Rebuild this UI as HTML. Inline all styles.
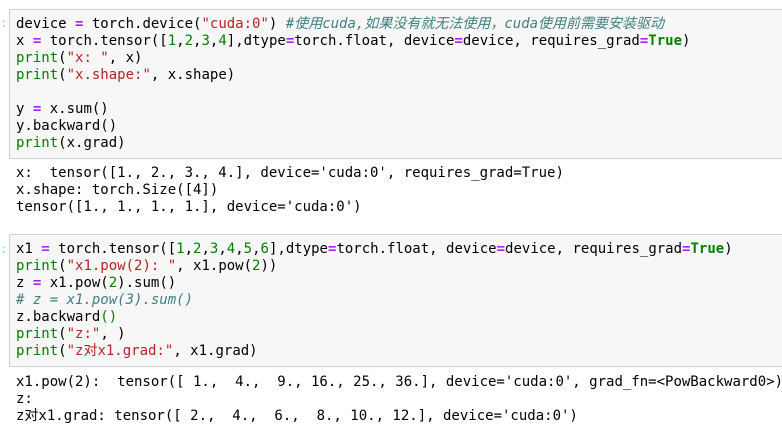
<!DOCTYPE html>
<html><head><meta charset="utf-8"><style>
body{margin:0;width:782px;height:428px;background:#fff;overflow:hidden;position:relative;font-family:"DejaVu Sans Mono","Liberation Mono","Noto Sans CJK SC",monospace;font-size:14px;color:#000}
.cell{position:absolute;left:9px;width:790px;background:#f7f7f7;border:1px solid #cfcfcf;border-radius:2px}
pre{margin:0;font:inherit;line-height:17px;white-space:pre;position:absolute;left:16px}
.k{color:#008000}.s{color:#ba2121}.n{color:#008000}.o{color:#aa22ff;font-weight:bold}.c{color:#408080;font-style:italic}.b{color:#008000;font-weight:bold}
.m{position:absolute;left:0;color:#7fd6f5;font-size:12px}
</style></head><body>
<div class="m" style="top:16px">:</div>
<div class="cell" style="top:9px;height:148px"></div>
<pre style="top:16px">device <span class="o">=</span> torch.device(<span class="s">"cuda:0"</span>) <span class="c">#使用cuda,如果没有就无法使用，cuda使用前需要安装驱动</span>
x <span class="o">=</span> torch.tensor([<span class="n">1</span>,<span class="n">2</span>,<span class="n">3</span>,<span class="n">4</span>],dtype<span class="o">=</span>torch.float, device<span class="o">=</span>device, requires_grad<span class="o">=</span><span class="b">True</span>)
<span class="k">print</span>(<span class="s">"x: "</span>, x)
<span class="k">print</span>(<span class="s">"x.shape:"</span>, x.shape)

y <span class="o">=</span> x.sum()
y.backward()
<span class="k">print</span>(x.grad)</pre>
<pre style="top:165px">x:  tensor([1., 2., 3., 4.], device='cuda:0', requires_grad=True)
x.shape: torch.Size([4])
tensor([1., 1., 1., 1.], device='cuda:0')</pre>
<div class="m" style="top:242px">:</div>
<div class="cell" style="top:234px;height:131px"></div>
<pre style="top:241px">x1 <span class="o">=</span> torch.tensor([<span class="n">1</span>,<span class="n">2</span>,<span class="n">3</span>,<span class="n">4</span>,<span class="n">5</span>,<span class="n">6</span>],dtype<span class="o">=</span>torch.float, device<span class="o">=</span>device, requires_grad<span class="o">=</span><span class="b">True</span>)
<span class="k">print</span>(<span class="s">"x1.pow(2): "</span>, x1.pow(<span class="n">2</span>))
z <span class="o">=</span> x1.pow(<span class="n">2</span>).sum()
<span class="c"># z = x1.pow(3).sum()</span>
z.backward<span class="k">()</span>
<span class="k">print</span>(<span class="s">"z:"</span>, )
<span class="k">print</span>(<span class="s">"z对x1.grad:"</span>, x1.grad)</pre>
<pre style="top:374px">x1.pow(2):  tensor([ 1.,  4.,  9., 16., 25., 36.], device='cuda:0', grad_fn=&lt;PowBackward0&gt;)
z:
z对x1.grad: tensor([ 2.,  4.,  6.,  8., 10., 12.], device='cuda:0')</pre>
</body></html>
